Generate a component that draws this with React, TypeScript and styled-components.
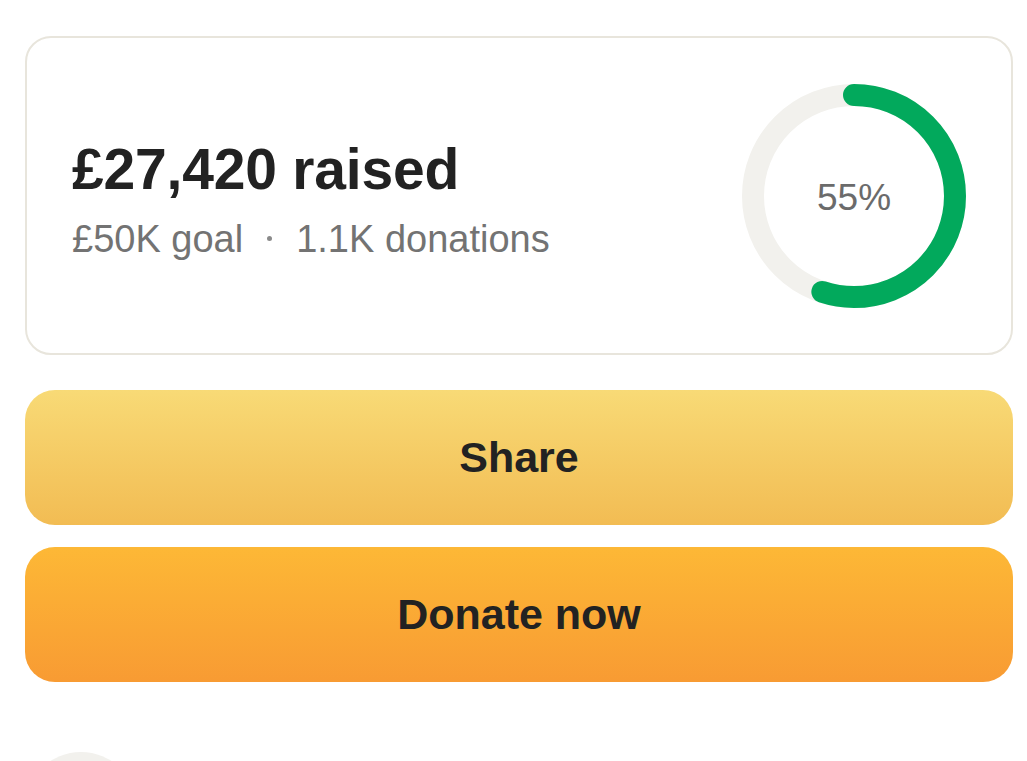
import styled, { createGlobalStyle } from 'styled-components'

const GlobalStyle = createGlobalStyle`
  html, body {
    margin: 0;
    padding: 0;
    background: #ffffff;
    overflow: hidden;
  }

  body {
    font-family: 'Liberation Sans', Arial, sans-serif;
    -webkit-font-smoothing: antialiased;
  }
`

const Page = styled.main`
  display: flex;
  flex-direction: column;

  width: 988px;
  height: 761px;
  padding: 36px 14px 0 25px;

  overflow: hidden;
`

const Card = styled.section`
  display: flex;
  align-items: center;
  justify-content: space-between;

  padding: 45px 44px 44px 45px;

  background-color: #ffffff;
  border: 2px solid #e8e5dc;
  border-radius: 26px;
`

const Summary = styled.div`
  display: flex;
  flex-direction: column;
  gap: 15px;

  padding-top: 6px;
`

const Raised = styled.h2`
  margin: 0;

  color: #222222;
  font-size: 57px;
  font-weight: 700;
  line-height: 64px;
  letter-spacing: -0.2px;
`

const Meta = styled.p`
  display: flex;
  align-items: center;
  gap: 24px;

  margin: 0;

  color: #737373;
  font-size: 38px;
  font-weight: 400;
  line-height: 46px;
`

const Dot = styled.span`
  width: 5px;
  height: 5px;

  background-color: #8a8a8a;
  border-radius: 50%;
`

const Ring = styled.div`
  position: relative;

  display: grid;
  place-items: center;

  width: 226px;
  height: 226px;
`

const RingSvg = styled.svg`
  position: absolute;
  inset: 0;
`

const Percent = styled.span`
  position: relative;
  top: 2px;

  color: #6b6b6b;
  font-size: 37px;
  font-weight: 400;
`

const Actions = styled.div`
  display: flex;
  flex-direction: column;
  gap: 22px;

  margin-top: 35px;
`

const Button = styled.button<{ $variant: 'share' | 'donate' }>`
  display: flex;
  align-items: center;
  justify-content: center;

  height: 135px;
  padding: 0;

  background: ${({ $variant }) =>
    $variant === 'share'
      ? 'linear-gradient(180deg, #f8da76 0%, #f2bc53 100%)'
      : 'linear-gradient(180deg, #fdb836 0%, #f89b33 100%)'};
  border: none;
  border-radius: 30px;

  color: #222222;
  font-family: 'Liberation Sans', Arial, sans-serif;
  font-size: 43px;
  font-weight: 700;
  cursor: pointer;
`

const Avatar = styled.div`
  width: 112px;
  height: 112px;
  margin-top: 70px;

  flex-shrink: 0;

  background-color: #f2f1ed;
  border-radius: 50%;
`

const SIZE = 226
const STROKE = 22
const RADIUS = (SIZE - STROKE) / 2 - 1

const ProgressRing = ({ value }: { value: number }) => {
  const circumference = 2 * Math.PI * RADIUS
  const filled = (circumference * value) / 100

  return (
    <Ring>
      <RingSvg width={SIZE} height={SIZE} viewBox={`0 0 ${SIZE} ${SIZE}`}>
        <circle
          cx={SIZE / 2}
          cy={SIZE / 2}
          r={RADIUS}
          fill="none"
          stroke="#f2f1ed"
          strokeWidth={STROKE}
        />
        <circle
          cx={SIZE / 2}
          cy={SIZE / 2}
          r={RADIUS}
          fill="none"
          stroke="#02a95c"
          strokeWidth={STROKE}
          strokeLinecap="round"
          strokeDasharray={`${filled} ${circumference}`}
          transform={`rotate(-90 ${SIZE / 2} ${SIZE / 2})`}
        />
      </RingSvg>
      <Percent>{value}%</Percent>
    </Ring>
  )
}

const App = () => (
  <>
    <GlobalStyle />
    <Page>
      <Card>
        <Summary>
          <Raised>£27,420 raised</Raised>
          <Meta>
            <span>£50K goal</span>
            <Dot />
            <span>1.1K donations</span>
          </Meta>
        </Summary>
        <ProgressRing value={55} />
      </Card>
      <Actions>
        <Button $variant="share">Share</Button>
        <Button $variant="donate">Donate now</Button>
      </Actions>
      <Avatar />
    </Page>
  </>
)

export default App
